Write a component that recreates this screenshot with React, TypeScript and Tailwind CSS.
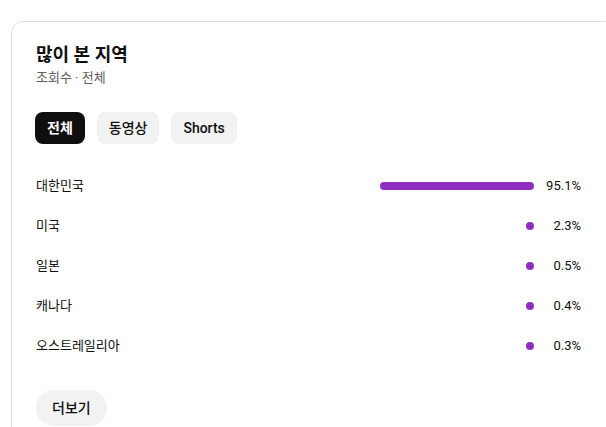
import React from "react"

const rows = [
  { name: "대한민국", pct: 95.1 },
  { name: "미국", pct: 2.3 },
  { name: "일본", pct: 0.5 },
  { name: "캐나다", pct: 0.4 },
  { name: "오스트레일리아", pct: 0.3 },
]

const font = { fontFamily: "Roboto, 'Noto Sans CJK KR', sans-serif" }

export default function App() {
  return (
    <div className="w-[606px] h-[427px] overflow-hidden bg-white text-[#0f0f0f]" style={font}>
      <div className="ml-[11px] mt-[21px] w-[606px] rounded-xl border border-[#e0e0e0] pl-[23px] pr-[35px] pt-[21px] pb-6">
        {/* header */}
        <h2 className="ml-px text-[18px] leading-6 font-bold">많이 본 지역</h2>
        <p className="ml-px mt-0.5 text-[13px] leading-[18px] text-[#606060]">조회수 · 전체</p>

        {/* filter chips */}
        <div className="mt-[25px] flex gap-3">
          <button className="h-8 px-3 rounded-lg bg-[#0f0f0f] text-white text-sm font-bold">전체</button>
          <button className="h-8 px-3 rounded-lg bg-[#f2f2f2] text-sm font-medium">동영상</button>
          <button className="h-8 px-3 rounded-lg bg-[#f2f2f2] text-sm font-medium">Shorts</button>
        </div>

        {/* rows */}
        <div className="mt-[22px] ml-px">
          {rows.map((r) => (
            <div key={r.name} className="flex items-center h-10 text-[13px]">
              <span className="flex-1">{r.name}</span>
              <div className="w-[162px] flex justify-end">
                <div
                  className="h-2 rounded-full bg-[#8e2fc4]"
                  style={{ width: `${Math.max(8, (r.pct / 100) * 162)}px` }}
                />
              </div>
              <span className="w-[47px] text-right">{r.pct.toFixed(1)}%</span>
            </div>
          ))}
        </div>

        <button className="ml-px mt-6 h-9 px-4 rounded-full bg-[#f2f2f2] text-sm font-medium">더보기</button>
      </div>
    </div>
  )
}
